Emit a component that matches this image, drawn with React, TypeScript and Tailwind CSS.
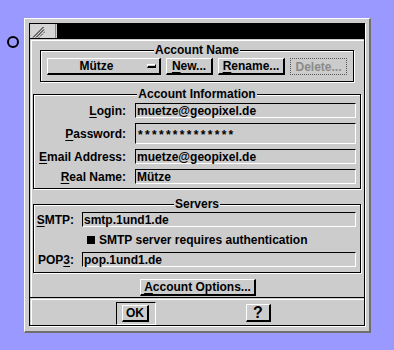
import React from 'react';

function Group({ title, className, children }: { title: string; className?: string; children: React.ReactNode }) {
  return (
    <div className={`relative border border-black shadow-[inset_1px_1px_0_#fff,1px_1px_0_#fff] ${className ?? ''}`}>
      <div className="absolute inset-x-0 top-[-7px] flex justify-center">
        <span className="bg-[#cccccc] px-[1px] leading-[12px] whitespace-nowrap">{title}</span>
      </div>
      {children}
    </div>
  );
}

function Button({ children, className }: { children: React.ReactNode; className?: string }) {
  return (
    <div
      className={`flex items-center justify-center h-[17px] leading-[12px] whitespace-nowrap border-t border-l border-white border-r-2 border-b-2 border-r-black border-b-black ${className ?? ''}`}
    >
      {children}
    </div>
  );
}

function Field({ value, className }: { value: string; className?: string }) {
  return (
    <div
      className={`flex items-center pl-[1px] border border-t-black border-l-black border-b-white border-r-white leading-[12px] whitespace-nowrap ${className ?? 'h-[15px]'}`}
    >
      {value}
    </div>
  );
}

function U({ children }: { children: React.ReactNode }) {
  return <span className="underline underline-offset-[2px] decoration-1">{children}</span>;
}

function Label({ children }: { children: React.ReactNode }) {
  return <div className="text-right whitespace-nowrap leading-[12px]">{children}</div>;
}

export default function App() {
  return (
    <div className="min-h-screen bg-[#9999ff] flex items-start pt-[18px] font-['Liberation_Sans',Arial,sans-serif] font-bold text-[12px] text-black">
      <div className="ml-[7px] mt-[18px] w-[12px] h-[12px] rounded-full border-2 border-black" />

      <div className="ml-[5px] bg-[#cccccc] border-t border-l border-white border-r-2 border-b-2 border-r-[#6e6e6e] border-b-[#6e6e6e] pt-[4px] pl-[4px] pr-[4px] pb-[5px]">
        <div className="w-[336px] flex flex-col border border-black shadow-[1px_1px_0_#fff]">
          {/* title bar */}
          <div className="flex h-[15px] pl-[1px] border-b border-black">
            <div className="w-[25px] h-[14px] border-r border-[#8a8a8a] bg-[#d4d4d4]">
              <svg width="24" height="14" viewBox="0 0 24 14">
                <line x1="2" y1="13.5" x2="12.5" y2="3" stroke="#000" strokeWidth="1" />
                <line x1="5" y1="13.5" x2="13" y2="5.5" stroke="#000" strokeWidth="1" />
                <line x1="8" y1="13.5" x2="14" y2="7.5" stroke="#000" strokeWidth="1" strokeDasharray="1 1" />
              </svg>
            </div>
            <div className="flex-1 ml-[1px] h-[14px] bg-black" />
          </div>

          {/* main panel */}
          <div className="mt-[1px] ml-[1px] border-t border-l border-white pt-[9px] pb-[1px] flex flex-col">
            <Group title="Account Name" className="ml-[8px] w-[314px] pt-[7px] pb-[6px] pl-[6px]">
              <div className="flex gap-[5px]">
                <Button className="w-[114px] relative">
                  <span className="mr-[14px]">Mütze</span>
                  <div className="absolute right-[3px] top-[5px] w-[9px] h-[4px] border-t border-l border-white border-r border-b-2 border-r-black border-b-black" />
                </Button>
                <Button className="w-[47px]">
                  <U>N</U>ew...
                </Button>
                <Button className="w-[67px]">
                  <U>R</U>ename...
                </Button>
                <div className="w-[57px] h-[17px] flex items-center justify-center leading-[12px] border border-dotted border-[#555] text-[#8a8a8a]">
                  Delete...
                </div>
              </div>
            </Group>

            <Group title="Account Information" className="ml-[1px] mt-[12px] w-[328px] pt-[8px] pb-[4px] pr-[4px]">
              <div className="grid grid-cols-[92px_1fr] gap-x-[9px] gap-y-[5px] items-center">
                <Label>
                  <U>L</U>ogin:
                </Label>
                <Field value="muetze@geopixel.de" />
                <Label>
                  <U>P</U>assword:
                </Label>
                <Field value="**************" className="h-[21px] pl-[2px] tracking-[2.3px] pt-[3px]" />
                <Label>
                  <U>E</U>mail Address:
                </Label>
                <Field value="muetze@geopixel.de" />
                <Label>
                  <U>R</U>eal Name:
                </Label>
                <Field value="Mütze" />
              </div>
            </Group>

            <Group title="Servers" className="ml-[1px] mt-[15px] w-[328px] pt-[7px] pb-[5px] pr-[4px]">
              <div className="grid grid-cols-[40px_1fr] gap-x-[8px] items-center">
                <Label>
                  <U>S</U>MTP:
                </Label>
                <Field value="smtp.1und1.de" />
                <div className="col-start-2 h-[25px] flex items-center pl-[5px] gap-[4px] leading-[12px] whitespace-nowrap">
                  <div className="w-[8px] h-[8px] bg-black" />
                  SMTP server requires authentication
                </div>
                <Label>
                  POP<U>3</U>:
                </Label>
                <Field value="pop.1und1.de" />
              </div>
            </Group>

            <Button className="ml-[108px] mt-[6px] w-[116px]">
              <U>A</U>ccount Options...
            </Button>
          </div>

          {/* bottom button row */}
          <div className="border-t border-black">
            <div className="mt-[1px] ml-[1px] border-t border-l border-white h-[26px] flex items-start">
              <div className="ml-[84px] mt-[2px] w-[40px] h-[23px] border border-t-black border-l-black border-b-white border-r-white pl-[5px] pt-[2px]">
                <Button className="w-[27px]">OK</Button>
              </div>
              <Button className="ml-[90px] mt-[4px] w-[25px] !h-[18px] text-[16px]">?</Button>
            </div>
          </div>
        </div>
      </div>
    </div>
  );
}
